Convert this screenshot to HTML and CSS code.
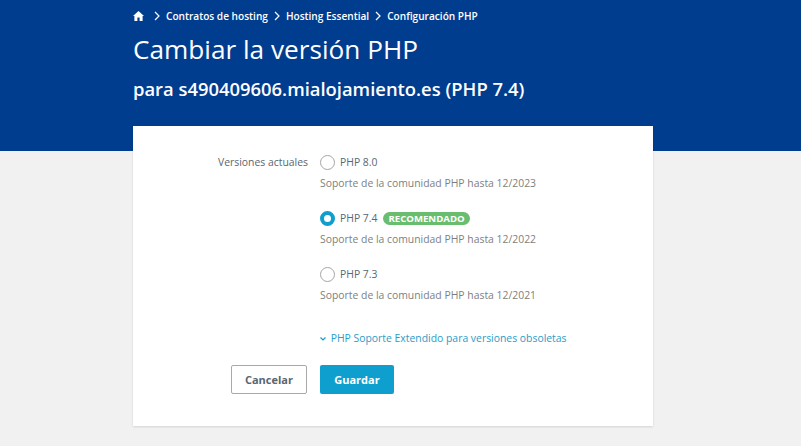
FILE: index.html
```html
<!DOCTYPE html>
<html lang="es">
<head>
    <meta charset="UTF-8">
    <meta name="viewport" content="width=device-width, initial-scale=1.0">
    <title>Cambiar la versión PHP</title>
    <link rel="stylesheet" href="styles.css">
</head>
<body>
    <header class="hero">
        <div class="page-width">
            <nav class="breadcrumb">
                <svg class="home-icon" width="11" height="10" viewBox="0 0 11 10"><path d="M5.5 0 11 5 9.6 5 9.6 10 6.6 10 6.6 6.6 4.4 6.6 4.4 10 1.4 10 1.4 5 0 5z" fill="#fff"/></svg>
                <svg class="crumb-sep home-sep" width="6" height="10" viewBox="0 0 6 10"><path d="M1 1l4 4-4 4" fill="none" stroke="#fff" stroke-width="1.2"/></svg>
                <span>Contratos de hosting</span>
                <svg class="crumb-sep" width="6" height="10" viewBox="0 0 6 10"><path d="M1 1l4 4-4 4" fill="none" stroke="#fff" stroke-width="1.2"/></svg>
                <span>Hosting Essential</span>
                <svg class="crumb-sep" width="6" height="10" viewBox="0 0 6 10"><path d="M1 1l4 4-4 4" fill="none" stroke="#fff" stroke-width="1.2"/></svg>
                <span>Configuración PHP</span>
            </nav>
            <h1>Cambiar la versión PHP</h1>
            <h2>para s490409606.mialojamiento.es (PHP 7.4)</h2>
        </div>
    </header>

    <main class="page-width card">
        <div class="form-row">
            <div class="form-label">Versiones actuales</div>
            <div class="form-options">
                <div class="option">
                    <div class="option-head">
                        <span class="radio"></span>
                        <span>PHP 8.0</span>
                    </div>
                    <p class="option-note">Soporte de la comunidad PHP hasta 12/2023</p>
                </div>
                <div class="option">
                    <div class="option-head">
                        <span class="radio checked"></span>
                        <span>PHP 7.4</span>
                        <span class="badge">RECOMENDADO</span>
                    </div>
                    <p class="option-note">Soporte de la comunidad PHP hasta 12/2022</p>
                </div>
                <div class="option">
                    <div class="option-head">
                        <span class="radio"></span>
                        <span>PHP 7.3</span>
                    </div>
                    <p class="option-note">Soporte de la comunidad PHP hasta 12/2021</p>
                </div>
                <a class="more-link" href="#">
                    <svg width="6" height="4" viewBox="0 0 6 4"><path d="M.5.5 3 3 5.500.5" fill="none" stroke="#0f9fcf" stroke-width="1.2"/></svg>
                    PHP Soporte Extendido para versiones obsoletas
                </a>
            </div>
        </div>
        <div class="form-actions">
            <div class="actions-left">
                <button class="btn btn-cancel">Cancelar</button>
            </div>
            <button class="btn btn-save">Guardar</button>
        </div>
    </main>
</body>
</html>
```

FILE: styles.css
```css
body {
    margin: 0;
    height: 446px;
    overflow: hidden;
    background-color: #f1f1f1;
    font-family: "Open Sans", "Noto Sans", sans-serif;
    color: #5a6670;
}

.page-width {
    width: 520px;
    margin-left: 133px;
}

.hero {
    height: 151px;
    background-color: #003d8f;
    color: #fff;
}

.breadcrumb {
    display: flex;
    align-items: center;
    gap: 6px;
    padding-top: 9px;
    height: 14px;
    font-size: 10.1px;
    font-weight: 600;
}

.home-sep {
    margin-left: 4px;
}

.hero h1 {
    margin: 9px 0 0;
    font-size: 26.2px;
    line-height: 34px;
    font-weight: 400;
}

.hero h2 {
    margin: 12px 0 0;
    font-size: 18.4px;
    line-height: 22px;
    font-weight: 600;
}

.card {
    margin-top: -25px;
    height: 300px;
    box-sizing: border-box;
    background-color: #fff;
    box-shadow: 0 1px 2px rgba(0, 0, 0, 0.12);
}

.form-row {
    display: flex;
    padding-top: 28px;
}

.form-label {
    width: 175px;
    box-sizing: border-box;
    text-align: right;
    font-size: 10.4px;
    line-height: 16px;
}

.form-options {
    flex: 1;
    padding-left: 12px;
}

.option {
    height: 56px;
}

.option-head {
    display: flex;
    align-items: center;
    height: 16px;
    font-size: 10.4px;
}

.radio {
    width: 13px;
    height: 13px;
    border: 1px solid #a5a5a5;
    border-radius: 50%;
    margin-right: 5px;
    background-color: #fff;
}

.radio.checked {
    width: 7px;
    height: 7px;
    border: 4px solid #0f9fcf;
}

.badge {
    margin-left: 6px;
    padding: 0 5px;
    height: 13px;
    line-height: 13px;
    border-radius: 7px;
    background-color: #68bd6f;
    color: #fff;
    font-size: 9.6px;
    font-weight: 700;
}

.option-note {
    margin: 5px 0 0;
    font-size: 10.4px;
    line-height: 16px;
    color: #7b7f82;
}

.more-link {
    display: block;
    margin-top: 8px;
    font-size: 10.4px;
    line-height: 16px;
    color: #2a9cc8;
    text-decoration: none;
}

.more-link svg {
    vertical-align: 1px;
    margin-right: 2px;
}

.form-actions {
    display: flex;
    margin-top: 19px;
}

.actions-left {
    width: 174px;
    box-sizing: border-box;
    text-align: right;
}

.btn {
    height: 29px;
    padding: 0;
    border-radius: 2px;
    font-family: inherit;
    font-size: 11px;
    font-weight: 700;
}

.btn-cancel {
    width: 76px;
    background-color: #fff;
    border: 1px solid #a9a9a9;
    color: #5a6670;
}

.btn-save {
    width: 74px;
    margin-left: 13px;
    background-color: #0f9fcf;
    border: 0;
    color: #fff;
}
```
